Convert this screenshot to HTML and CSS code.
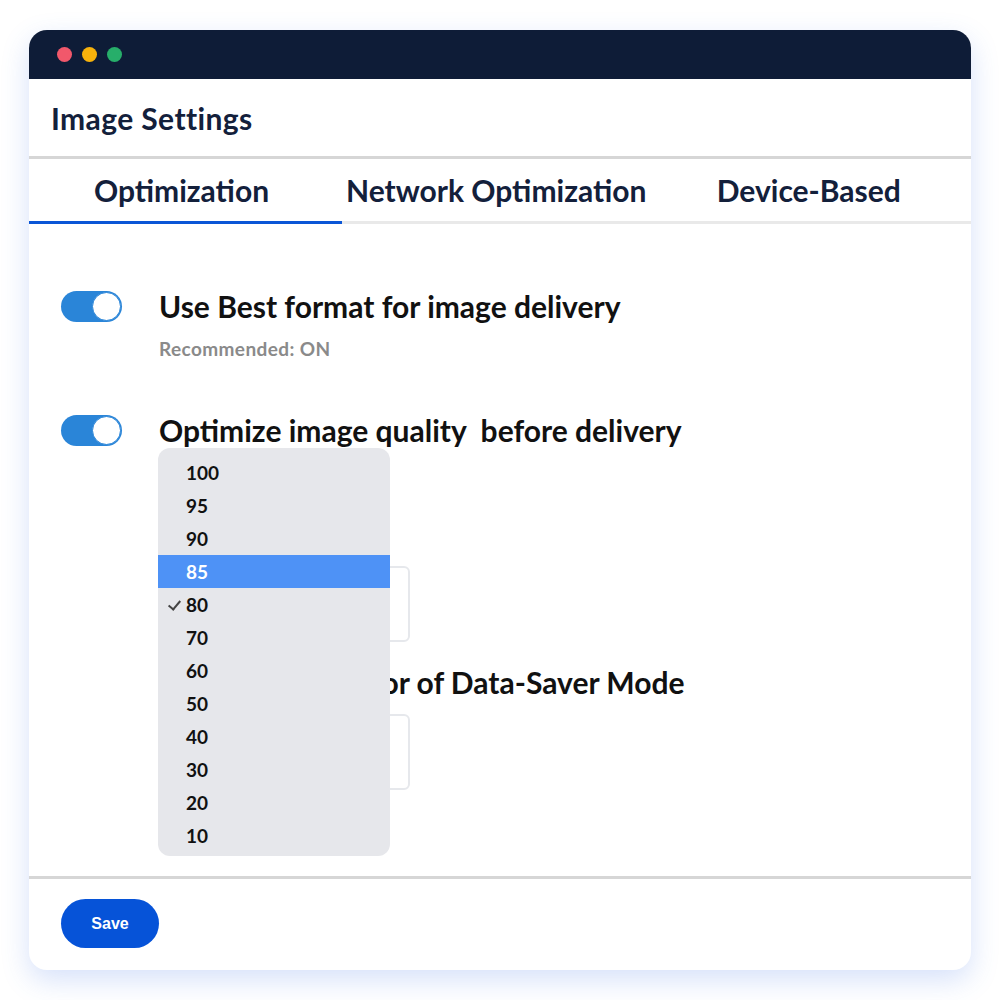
FILE: index.html
```html
<!DOCTYPE html>
<html lang="en">
<head>
    <meta charset="UTF-8">
    <meta name="viewport" content="width=device-width, initial-scale=1.0">
    <title>Image Settings</title>
    <link rel="stylesheet" href="styles.css">
</head>
<body>
    <div class="window">
        <div class="titlebar">
            <span class="dot red"></span>
            <span class="dot yellow"></span>
            <span class="dot green"></span>
        </div>
        <header class="page-head">
            <h1>Image Settings</h1>
        </header>
        <nav class="tabs">
            <div class="tab active">Optimization</div>
            <div class="tab">Network Optimization</div>
            <div class="tab">Device-Based</div>
        </nav>
        <main class="content">
            <div class="setting">
                <div class="toggle on"><span class="knob"></span></div>
                <div class="setting-body">
                    <h2>Use Best format for image delivery</h2>
                    <p class="hint">Recommended: ON</p>
                </div>
            </div>
            <div class="setting">
                <div class="toggle on"><span class="knob"></span></div>
                <div class="setting-body">
                    <h2>Optimize image quality&nbsp; before delivery</h2>
                    <div class="field first"></div>
                    <h2 class="sub">Set a quality factor of Data-Saver Mode</h2>
                    <div class="field"></div>
                </div>
            </div>

            <ul class="dropdown">
                <li>100</li>
                <li>95</li>
                <li>90</li>
                <li class="hover">85</li>
                <li class="checked">80</li>
                <li>70</li>
                <li>60</li>
                <li>50</li>
                <li>40</li>
                <li>30</li>
                <li>20</li>
                <li>10</li>
            </ul>
        </main>
        <footer class="actions">
            <button class="save">Save</button>
        </footer>
    </div>
</body>
</html>
```

FILE: styles.css
```css
body {
    margin: 0;
    padding: 30px 29px;
    background-color: #fff;
    font-family: Lato, "Open Sans", Arial, sans-serif;
    color: #111;
}
.window {
    width: 942px;
    height: 940px;
    background-color: #fff;
    border-radius: 18px;
    box-shadow: 0 10px 28px rgba(70, 120, 230, 0.22);
    display: flex;
    flex-direction: column;
    overflow: hidden;
}
.titlebar {
    height: 49px;
    flex-shrink: 0;
    background-color: #0e1c37;
    display: flex;
    align-items: center;
    gap: 10px;
    padding-left: 28px;
}
.dot {
    width: 15px;
    height: 15px;
    border-radius: 50%;
}
.red { background-color: #f1586b; }
.yellow { background-color: #f7b20c; }
.green { background-color: #27ae6a; }

.page-head {
    height: 77px;
    flex-shrink: 0;
    display: flex;
    align-items: center;
    padding-left: 22px;
    border-bottom: 3px solid #d6d6d6;
}
.page-head h1 {
    margin: 0;
    font-size: 30px;
    font-weight: 700;
    letter-spacing: 0.4px;
    color: #13203b;
}
.tabs {
    display: grid;
    grid-template-columns: 313px 1fr 1fr;
    border-bottom: 3px solid #e9e9e9;
    flex-shrink: 0;
}
.tab {
    height: 62px;
    display: flex;
    align-items: center;
    justify-content: center;
    font-size: 30px;
    font-weight: 700;
    color: #13203b;
    margin-bottom: -3px;
    border-bottom: 3px solid transparent;
}
.tab:nth-child(2) { padding-right: 6px; }
.tab:nth-child(3) { padding-right: 10px; }
.tab.active {
    border-bottom-color: #0b56d6;
    padding-right: 8px;
}
.content {
    position: relative;
    flex: 1;
    padding: 66px 32px 0;
    border-bottom: 3px solid #d6d6d6;
}
.setting {
    display: flex;
    align-items: flex-start;
    gap: 37px;
    margin-bottom: 53px;
}
.toggle {
    width: 61px;
    height: 31px;
    margin-top: 1px;
    border-radius: 16px;
    background-color: #2a85d8;
    flex-shrink: 0;
    display: flex;
    align-items: center;
    justify-content: flex-end;
    box-sizing: border-box;
    padding-right: 1px;
}
.knob {
    width: 27px;
    height: 27px;
    border-radius: 50%;
    background-color: #fff;
    border: 1px solid #2a85d8;
}
.setting-body {
    margin-top: -2px;
}
.setting-body h2 {
    margin: 0;
    font-size: 30px;
    line-height: 36px;
    font-weight: 700;
    color: #111;
}
.hint {
    margin: 13px 0 0;
    font-size: 19px;
    line-height: 24px;
    letter-spacing: 0.4px;
    font-weight: 700;
    color: #8a8a8a;
}
.field {
    width: 251px;
    height: 76px;
    box-sizing: border-box;
    border: 2px solid #e6e8ec;
    border-radius: 6px;
}
.field.first {
    margin-top: 118px;
}
.setting-body h2.sub {
    margin: 22px 0 14px;
}
.dropdown {
    position: absolute;
    left: 129px;
    top: 224px;
    width: 232px;
    margin: 0;
    padding: 8px 0 4px;
    list-style: none;
    background-color: #e6e7eb;
    border-radius: 12px;
}
.dropdown li {
    height: 33px;
    display: flex;
    align-items: center;
    padding-left: 28px;
    font-size: 19px;
    font-weight: 700;
    color: #111;
    position: relative;
}
.dropdown li.hover {
    background-color: #4e92f6;
    color: #fff;
}
.dropdown li.checked::before {
    content: "";
    position: absolute;
    left: 13px;
    top: 10px;
    width: 5px;
    height: 10px;
    border-right: 2px solid #444;
    border-bottom: 2px solid #444;
    transform: rotate(40deg);
}
.actions {
    height: 91px;
    display: flex;
    align-items: center;
    padding-left: 32px;
}
.save {
    width: 98px;
    height: 49px;
    border: none;
    border-radius: 25px;
    background-color: #0653d8;
    color: #fff;
    font-family: "Liberation Sans", Arial, sans-serif;
    font-size: 16px;
    font-weight: 700;
    margin-top: -2px;
}
```
